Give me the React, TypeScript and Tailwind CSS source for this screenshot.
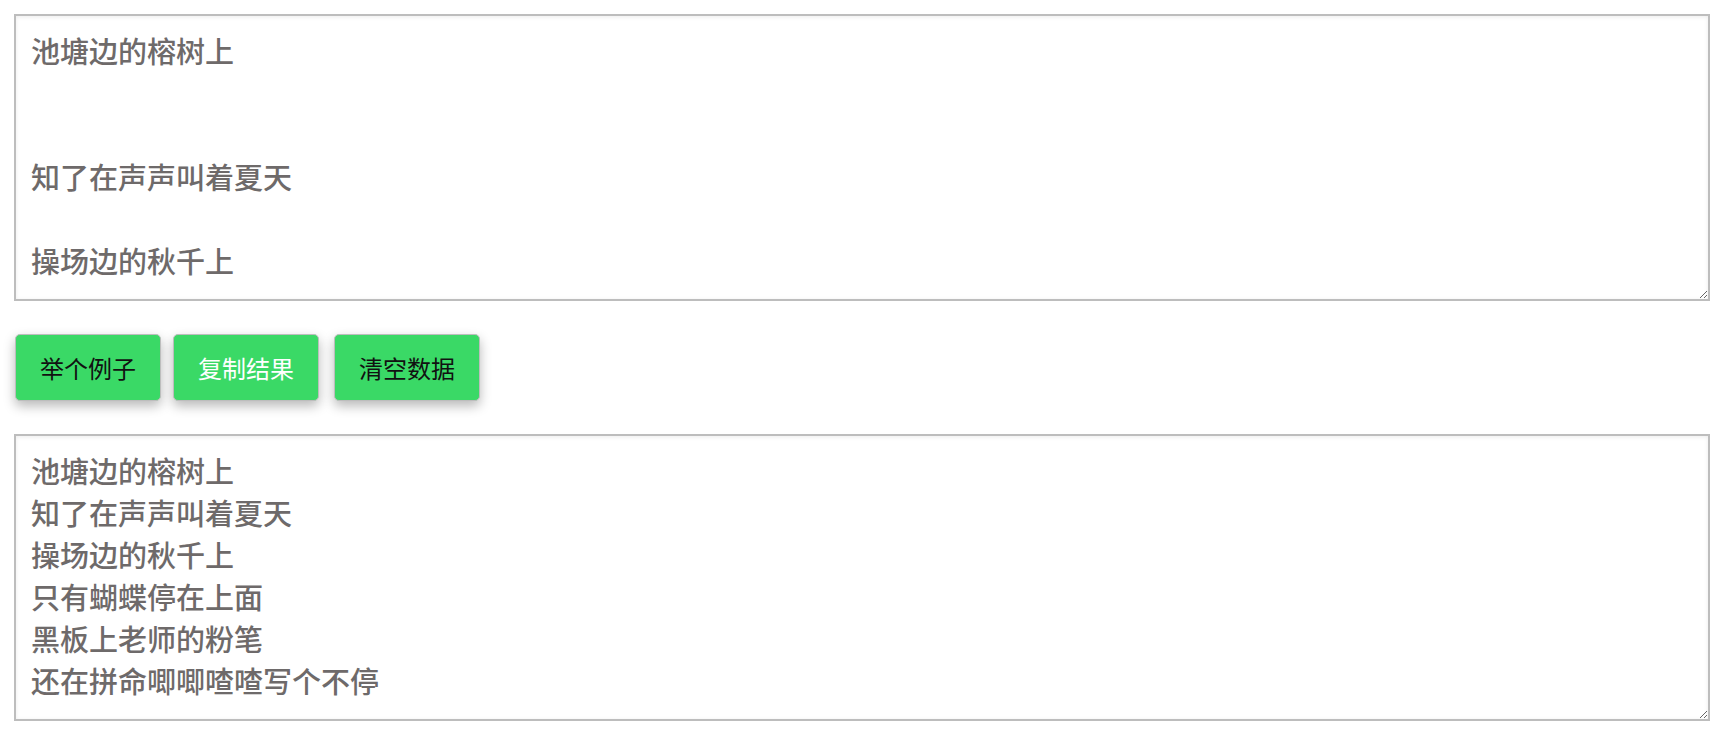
import { useState } from 'react'

const source = `池塘边的榕树上


知了在声声叫着夏天

操场边的秋千上

只有蝴蝶停在上面


黑板上老师的粉笔

还在拼命唧唧喳喳写个不停`

const result = `池塘边的榕树上
知了在声声叫着夏天
操场边的秋千上
只有蝴蝶停在上面
黑板上老师的粉笔
还在拼命唧唧喳喳写个不停`

const font = "font-['Noto_Sans_CJK_SC','Noto_Sans',sans-serif]"

export default function App() {
  const [input, setInput] = useState(source)
  const [output, setOutput] = useState(result)

  return (
    <div className={`min-h-screen bg-white pt-[14px] pl-[14px] pr-[16px] ${font}`}>
      <textarea
        value={input}
        onChange={e => setInput(e.target.value)}
        className="block w-full h-[287px] border-2 border-[#bdbdbd] px-[15px] py-[13px] text-[29px] leading-[42px] font-medium text-[#6e6a6a] shadow-[inset_0_1px_4px_rgba(0,0,0,0.08)] outline-none"
      />

      <div className="flex items-center mt-[33px] mb-[33px] pl-[1px]">
        <button className="w-[146px] h-[67px] rounded-[5px] border border-[#bdbdbd] bg-[#3ad966] text-[24px] text-[#111] shadow-[0_5px_12px_rgba(0,0,0,0.28)]">
          举个例子
        </button>
        <button
          onClick={() => navigator.clipboard?.writeText(output)}
          className="ml-[12px] w-[146px] h-[67px] rounded-[5px] border border-[#bdbdbd] bg-[#3ad966] text-[24px] text-white shadow-[0_5px_12px_rgba(0,0,0,0.28)]"
        >
          复制结果
        </button>
        <button
          onClick={() => { setInput(''); setOutput('') }}
          className="ml-[15px] w-[146px] h-[67px] rounded-[5px] border border-[#bdbdbd] bg-[#3ad966] text-[24px] text-[#111] shadow-[0_5px_12px_rgba(0,0,0,0.28)]"
        >
          清空数据
        </button>
      </div>

      <textarea
        value={output}
        onChange={e => setOutput(e.target.value)}
        className="block w-full h-[287px] border-2 border-[#bdbdbd] px-[15px] py-[13px] text-[29px] leading-[42px] font-medium text-[#6e6a6a] shadow-[inset_0_1px_4px_rgba(0,0,0,0.08)] outline-none"
      />
    </div>
  )
}
